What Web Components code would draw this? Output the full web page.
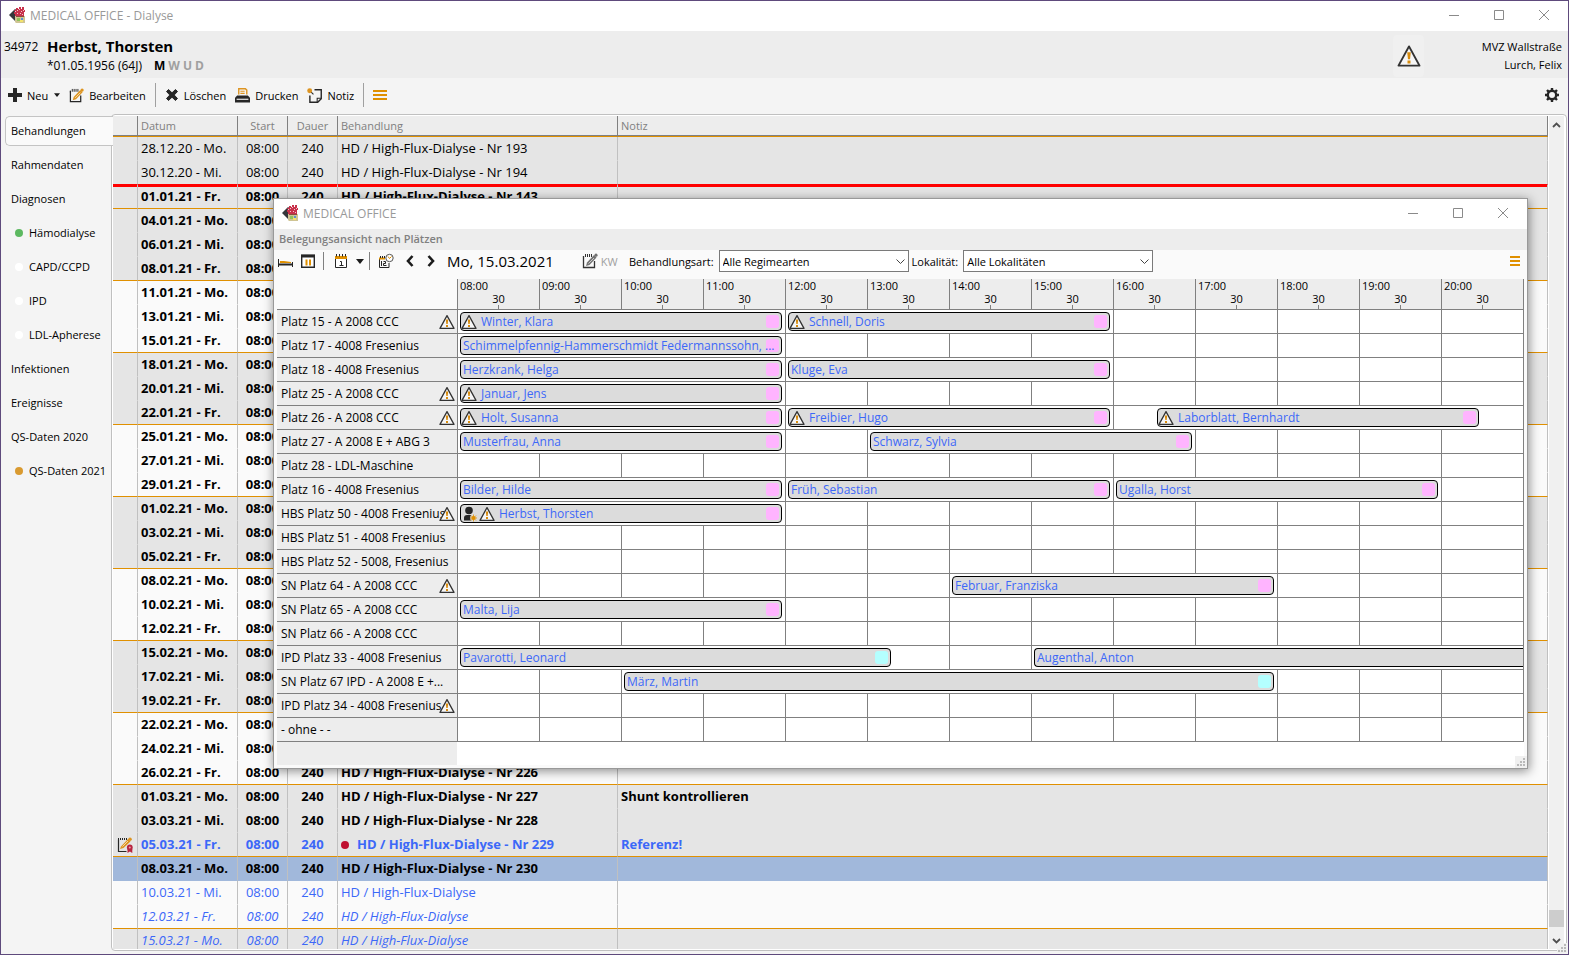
<!DOCTYPE html>
<html lang="de">
<head>
<meta charset="utf-8">
<title>MEDICAL OFFICE - Dialyse</title>
<style>
  html, body {
    height: 100%;
    margin: 0;
  }
  body {
    font-family: "Open Sans", "Noto Sans", sans-serif;
    font-size: 11px;
    color: #000;
    overflow: hidden;
  }
</style>
</head>
<body>
<office-app></office-app>

<script>
// all icons: viewBox and shapes
const ICONS = {
  logo: ['0 0 16 16', `
    <path d="M0 8 6 2v12z" fill="#35363a"/><path d="M6 2h1v12H6z" fill="#77787a"/>
    <path d="M5 3h2V1h2v1h1V0h2v2h1V0h2v3h1v2h-1v5H6V7H5V5h1z" fill="#c8304a"/>
    <path d="M8 3h1v1H8zM12 4h1v1h-1zM8 6h1v1H8zM11 6h1v1h-1zM14 3h1v1h-1zM10 2h1v1h-1zM13 7h1v1h-1zM6 4h1v1H6z" fill="#f3c3cb"/>
    <path d="M6 9h10v7H7l-1-1z" fill="#cfc493"/><path d="M8 11h3v3H8z" fill="#8fc25a"/>
    <path d="M12 11h2v2h-2z" fill="#5d8fcf"/><path d="M11 13h3v2h-3z" fill="#f4e46a"/><path d="M7 9h8v1H7z" fill="#8c4a3e"/>`],
  min: ['0 0 10 10', '<path d="M0 5.5h10" stroke="#8a8a8a" fill="none"/>'],
  max: ['0 0 10 10', '<path d="M.5.5h9v9h-9z" stroke="#8a8a8a" fill="none"/>'],
  close: ['0 0 10 10', '<path d="M0 0l10 10M10 0L0 10" stroke="#8a8a8a" fill="none"/>'],
  warn: ['0 0 16 16', `
    <path d="M8 1.6 15 14.4H1z" fill="#f6f6f6" stroke="#333" stroke-width="1.3" stroke-linejoin="round"/>
    <path d="M6.8 5.5h2.4l-.5 4.6H7.3zM7 11h2v2H7z" fill="#d88c0e"/>`],
  plus: ['0 0 14 14', '<path d="M5 0h4v5h5v4H9v5H5V9H0V5h5z" fill="#262626"/>'],
  caret: ['0 0 8 5', '<path d="M0 0h8L4 5z" fill="#1c1c1c"/>'],
  edit: ['0 0 16 16', `
    <path d="M1.5 3v11.500h11V8" fill="none" stroke="#262626" stroke-width="1.3"/>
    <path d="M1.5 3v2M3.5 1v3M5.5 1v3M7.5 1v3M9.5 1v3" stroke="#262626"/>
    <path d="M5 9.5 12 2l2.5 2.5L7.5 12 4 13z" fill="#dd9420"/>
    <path d="M6.5 10.5 12 5" stroke="#fff3d8" stroke-width=".8"/><circle cx="14" cy="2.2" r="1.7" fill="#dd9420"/>`],
  editgray: ['0 0 16 16', `
    <path d="M1.5 3v11.500h11V8" fill="none" stroke="#333" stroke-width="1.3"/>
    <path d="M1.5 3v2M3.5 1v3M5.5 1v3M7.5 1v3M9.5 1v3" stroke="#333"/>
    <path d="M5 9.5 12 2l2.5 2.5L7.5 12 4 13z" fill="#747474"/>
    <path d="M6.5 10.5 12 5" stroke="#ddd" stroke-width=".8"/><circle cx="14" cy="2.2" r="1.6" fill="#747474"/>`],
  editseal: ['0 0 16 16', `
    <path d="M1.500 2.500v12h8" fill="none" stroke="#262626" stroke-width="1.2"/>
    <path d="M1.5 1v3M3.5 1v2M5.5 1v2M7.5 1v2M9.5 1v2" stroke="#262626"/>
    <path d="M4 9.500 11 2l2.500 2.500L6.500 11 3 12z" fill="#dd9420"/><circle cx="13" cy="2.200" r="1.800" fill="#dd9420"/>
    <path d="M5.500 9.500 11 4" stroke="#fff3d8" stroke-width=".7"/>
    <circle cx="12.800" cy="10.500" r="2.900" fill="#b8253f"/><circle cx="12.800" cy="10.500" r="1" fill="#e7a0ab"/>
    <path d="M10.500 12h4.800v4l-2.400-1.400-2.400 1.400z" fill="#b8253f"/>`],
  cross: ['0 0 14 14', '<path d="M1.500 3.500 3.500 1.500 7 4.800l3.500-3.300 2 2L9.200 7l3.300 3.500-2 2L7 9.200l-3.500 3.300-2-2L4.800 7z" fill="#262626" stroke="#262626"/>'],
  print: ['0 0 14 14', `
    <path d="M3.500 6V.7h6.200l1.300 1.300v4" fill="none" stroke="#dd9420" stroke-width="1.300"/>
    <path d="M5 3h4M5 5h4" stroke="#dd9420"/>
    <path d="M2 7h10l2 2v4.500H0V9z" fill="#262626"/><path d="M1.500 10.500h11" stroke="#fff"/>`],
  note: ['0 0 14 14', `
    <path d="M7 1.600h6.300v8.400L10 13.300H2.700V7" fill="none" stroke="#262626" stroke-width="1.300"/>
    <path d="M9.500 13V9.500H13" fill="none" stroke="#262626"/>
    <path d="M3 3l3 3" stroke="#262626"/><circle cx="2.500" cy="2.500" r="2.300" fill="#dd9420"/>`],
  menu: ['0 0 14 10', '<path d="M0 0h14v2H0zM0 4h14v2H0zM0 8h14v2H0z" fill="#e09000"/>'],
  menusmall: ['0 0 10 10', '<path d="M0 0h10v2H0zM0 4h10v2H0zM0 8h10v2H0z" fill="#e09000"/>'],
  gear: ['0 0 14 14', `
    <circle cx="7" cy="7" r="4.200" fill="none" stroke="#262626" stroke-width="2.400"/>
    <path d="M7 0v2.500M7 11.500V14M0 7h2.500M11.500 7H14M2 2l1.800 1.800M10.200 10.200 12 12M12 2l-1.800 1.800M3.800 10.200 2 12" stroke="#262626" stroke-width="2.400"/>`],
  bed: ['0 0 16 16', `
    <path d="M1.500 6v8M15.500 9v5" stroke="#262626" fill="none"/><path d="M1 10.500h15v2H1z" fill="#262626"/>
    <path d="M3 9.500V8h4l7 1v1H3z" fill="#e09000"/>`],
  columns: ['0 0 16 16', `
    <path d="M1.700 2.500h12.600v11.800H1.700z" fill="#fff" stroke="#262626" stroke-width="1.400"/><path d="M1 1.500h14v3H1z" fill="#262626"/>
    <path d="M5.500 6.500h2v6h-2zM9 6.500h2v6H9z" fill="#e09000"/>`],
  day: ['0 0 16 16', `
    <path d="M2.500 5v9.500h11V5" fill="#fff" stroke="#262626"/><path d="M2 3h12v3H2z" fill="#e09000"/>
    <path d="M3.500 1v2.500M6.500 1v2.500M9.500 1v2.500M12.500 1v2.500" stroke="#262626"/><path d="M7 8.500h1.500V12M6.500 12.500h4" fill="none" stroke="#262626"/>`],
  dayclock: ['0 0 16 16', `
    <path d="M1.500 6v8.500h9.500V10" fill="none" stroke="#262626"/><path d="M1 4.500h6v2H1z" fill="#e09000"/>
    <path d="M2.500 3v2M4.500 3v2M6.500 3v2M3.500 8v5M5.500 8.500h2v2h-2v2h3" fill="none" stroke="#262626"/>
    <circle cx="11.500" cy="5" r="3.700" fill="#fff" stroke="#555"/><path d="M10 3.500 11.500 5.500 13.500 3.500" fill="none" stroke="#e09000"/>`],
  prev: ['0 0 10 14', '<path d="M7.500 2 3 7l4.500 5" fill="none" stroke="#1c1c1c" stroke-width="2.600"/>'],
  next: ['0 0 10 14', '<path d="M2.500 2 7 7l-4.500 5" fill="none" stroke="#1c1c1c" stroke-width="2.600"/>'],
  down: ['0 0 9 5', '<path d="M.5.5l4 4 4-4" fill="none" stroke="#444"/>'],
  up: ['0 0 9 6', '<path d="M1 5l3.500-3.500L8 5" fill="none" stroke="#505050" stroke-width="1.800"/>'],
  sdown: ['0 0 9 6', '<path d="M1 1l3.500 3.500L8 1" fill="none" stroke="#505050" stroke-width="1.800"/>'],
  person: ['0 0 16 16', `
    <circle cx="8" cy="4.500" r="3.800" fill="#262626"/><path d="M3 14.500V12q0-3 3-3h4q2 0 2 2v3.500z" fill="#262626"/>
    <circle cx="12.500" cy="12" r="3.400" fill="#dcdcdc"/><circle cx="12.500" cy="12" r="2" fill="#e09000"/>
    <path d="M12.500 8.500v7M9 12h7M10 9.500l5 5M15 9.500l-5 5" stroke="#e09000" stroke-width=".8"/>`],
  grip: ['0 0 8 8', '<path d="M6 0h2v2H6zM3 3h2v2H3zM6 3h2v2H6zM0 6h2v2H0zM3 6h2v2H3zM6 6h2v2H6z" fill="#b9b9b9"/>']
};

class MoIcon extends HTMLElement {
  connectedCallback() {
    if (this.shadowRoot) return;
    const [box, body] = ICONS[this.getAttribute('name')];
    const w = this.getAttribute('w') || 16;
    const h = this.getAttribute('h') || w;
    this.attachShadow({mode: 'open'}).innerHTML = `
      <style>
        :host { display: inline-flex; flex: none; }
        svg { display: block; }
      </style>
      <svg width="${w}" height="${h}" viewBox="${box}" aria-hidden="true">${body}</svg>`;
  }
}

// caption bar with logo, title and the three window buttons
class TitleBar extends HTMLElement {
  connectedCallback() {
    this.attachShadow({mode: 'open'}).innerHTML = `
      <style>
        :host { display: flex; align-items: center; height: 28px; padding: 0 2px 2px 0; background: #fff; color: #999; font-size: 12px; }
        mo-icon { margin: 0 5px 0 8px; }
        span { flex: 1; white-space: nowrap; }
        button { display: grid; place-items: center; width: 45px; height: 28px; padding: 0; border: 0; background: none; }
        button mo-icon { margin: 0; }
      </style>
      <mo-icon name="logo"></mo-icon>
      <span><slot></slot></span>
      <button aria-label="Minimieren"><mo-icon name="min" w="10"></mo-icon></button>
      <button aria-label="Maximieren"><mo-icon name="max" w="10"></mo-icon></button>
      <button aria-label="Schließen"><mo-icon name="close" w="10"></mo-icon></button>`;
  }
}

class PatientHeader extends HTMLElement {
  connectedCallback() {
    this.attachShadow({mode: 'open'}).innerHTML = `
      <style>
        :host { display: flex; align-items: center; height: 45px; padding: 2px 6px 0 3px; background: #ededed; font-size: 12px; }
        .who { display: grid; grid-template-columns: 43px auto; line-height: 19px; flex: 1; }
        h1 { margin: 0; font-size: 15px; line-height: 19px; }
        .born { grid-column: 2; display: flex; gap: 12px; }
        b { color: #a0a0a0; margin-right: 3px; }
        b:first-child { color: #000; }
        button { width: 31px; height: 42px; padding: 0; border: 0; border-radius: 4px; background: #f0f0f0; display: grid; place-items: center; }
        .office { width: 138px; text-align: right; line-height: 18px; font-size: 11px; }
      </style>
      <div class="who">
        <span>34972</span><h1>Herbst, Thorsten</h1>
        <div class="born"><span>*01.05.1956 (64J)</span><span><b>M</b><b>W</b><b>U</b><b>D</b></span></div>
      </div>
      <button aria-label="Warnungen"><mo-icon name="warn" w="24"></mo-icon></button>
      <div class="office">MVZ Wallstraße<br>Lurch, Felix</div>`;
  }
}

class ToolButton extends HTMLElement {
  connectedCallback() {
    const size = this.getAttribute('w') || 14;
    this.attachShadow({mode: 'open'}).innerHTML = `
      <style>
        :host { display: inline-flex; }
        button { display: flex; align-items: center; gap: 5px; height: 24px; padding: 0; border: 0; background: none; font: inherit; color: inherit; white-space: nowrap; }
      </style>
      <button aria-label="${this.getAttribute('label') || this.textContent}">
        <mo-icon name="${this.getAttribute('icon')}" w="${size}" h="${this.getAttribute('h') || size}"></mo-icon><slot></slot>
      </button>`;
  }
}

class MainToolbar extends HTMLElement {
  connectedCallback() {
    this.attachShadow({mode: 'open'}).innerHTML = `
      <style>
        :host { display: flex; align-items: center; gap: 9px; height: 34px; padding: 0 9px 2px 7px; background: #f4f4f4; }
        i { width: 1px; height: 24px; background: #a0a0a0; }
        .caret { margin: 0 0 0 -3px; }
        .end { margin-left: auto; }
      </style>
      <tool-button icon="plus">Neu</tool-button>
      <tool-button class="caret" icon="caret" w="6" h="4" label="Neu, Auswahl"></tool-button>
      <tool-button icon="edit" w="15">Bearbeiten</tool-button>
      <i></i>
      <tool-button icon="cross">Löschen</tool-button>
      <tool-button icon="print" w="15">Drucken</tool-button>
      <tool-button icon="note" w="15">Notiz</tool-button>
      <i></i>
      <tool-button icon="menu" w="14" h="10" label="Menü"></tool-button>
      <tool-button class="end" icon="gear" label="Einstellungen"></tool-button>`;
  }
}

class SideTabs extends HTMLElement {
  connectedCallback() {
    const tabs = [
      ['Behandlungen'], ['Rahmendaten'], ['Diagnosen'],
      ['Hämodialyse', '#5cb860'], ['CAPD/CCPD', '#fff'], ['IPD', '#fff'], ['LDL-Apherese', '#fff'],
      ['Infektionen'], ['Ereignisse'], ['QS-Daten 2020'], ['QS-Daten 2021', '#d99a30']
    ];
    this.attachShadow({mode: 'open'}).innerHTML = `
      <style>
        :host { display: block; width: 110px; padding: 2px 0 0 4px; box-sizing: border-box; }
        nav { display: grid; gap: 4px; }
        button { display: flex; align-items: center; gap: 6px; height: 30px; padding: 0 0 1px 5px; border: 1px solid transparent; background: none; font: inherit; color: inherit; text-align: left; white-space: nowrap; }
        .active { position: relative; margin-right: -2px; border-color: #c4c4c4; border-right: 0; border-radius: 5px 0 0 5px; background: #fafafa; }
        .sub { padding-left: 9px; }
        .sub::before { content: ""; width: 8px; height: 8px; border-radius: 4px; background: var(--dot); }
      </style>
      <nav>${tabs.map(([t, c], i) => `<button class="${i ? '' : 'active'} ${c ? 'sub' : ''}" style="--dot:${c}">${t}</button>`).join('')}</nav>`;
  }
}

// treatments: date, class names, number, note
// "w" marks the last row of a week; rows without a number have no details loaded
const DAYS = [
  ['28.12.20 - Mo.', 'g', 'Nr 193'], ['30.12.20 - Mi.', 'g year', 'Nr 194'], ['01.01.21 - Fr.', 'g b first w', 'Nr 143'],
  ['04.01.21 - Mo.', 'g b'], ['06.01.21 - Mi.', 'g b'], ['08.01.21 - Fr.', 'g b w'],
  ['11.01.21 - Mo.', 'b'], ['13.01.21 - Mi.', 'b'], ['15.01.21 - Fr.', 'b w'],
  ['18.01.21 - Mo.', 'g b'], ['20.01.21 - Mi.', 'g b'], ['22.01.21 - Fr.', 'g b w'],
  ['25.01.21 - Mo.', 'b'], ['27.01.21 - Mi.', 'b'], ['29.01.21 - Fr.', 'b w'],
  ['01.02.21 - Mo.', 'g b'], ['03.02.21 - Mi.', 'g b'], ['05.02.21 - Fr.', 'g b w'],
  ['08.02.21 - Mo.', 'b'], ['10.02.21 - Mi.', 'b'], ['12.02.21 - Fr.', 'b w'],
  ['15.02.21 - Mo.', 'g b'], ['17.02.21 - Mi.', 'g b'], ['19.02.21 - Fr.', 'g b w'],
  ['22.02.21 - Mo.', 'b'], ['24.02.21 - Mi.', 'b'], ['26.02.21 - Fr.', 'b w', 'Nr 226'],
  ['01.03.21 - Mo.', 'g b', 'Nr 227', 'Shunt kontrollieren'], ['03.03.21 - Mi.', 'g b', 'Nr 228'],
  ['05.03.21 - Fr.', 'g b blue seal w', 'Nr 229', 'Referenz!'], ['08.03.21 - Mo.', 'b sel', 'Nr 230'],
  ['10.03.21 - Mi.', 'blue', ''], ['12.03.21 - Fr.', 'blue it w', ''], ['15.03.21 - Mo.', 'g blue it', '']
];

class TreatmentTable extends HTMLElement {
  connectedCallback() {
    const rows = DAYS.map(([date, cls, nr, note]) => {
      const loaded = nr !== undefined;
      const seal = cls.includes('seal');
      return `<tr class="${cls}">
        <td class="c">${seal ? '<mo-icon name="editseal"></mo-icon>' : ''}</td>
        <td>${date}</td><td class="c">08:00</td><td class="c">${loaded ? '240' : ''}</td>
        <td>${seal ? '<i></i>' : ''}${loaded ? 'HD / High-Flux-Dialyse' : ''}${nr ? ' - ' + nr : ''}</td>
        <td>${note || ''}</td></tr>`;
    }).join('');
    this.attachShadow({mode: 'open'}).innerHTML = `
      <style>
        :host { display: block; overflow: hidden; background: #fafafa; }
        table { width: 100%; table-layout: fixed; border-collapse: separate; border-spacing: 0; font-size: 13px; }
        th, td { box-sizing: border-box; padding: 0 3px; text-align: left; white-space: nowrap; overflow: hidden; border-right: 1px solid #c0c0c0; }
        th { height: 21px; font-size: 11px; line-height: 18px; font-weight: normal; color: #808080; background: #ededed; border-right-color: #808080; border-bottom: 1px solid #e09000; box-shadow: inset 0 -1px #808080; }
        td { height: 24px; padding-bottom: 2px; line-height: 20px; border-bottom: 1px solid transparent; }
        .c { text-align: center; }
        .g { background: #e5e5e5; }
        .b { font-weight: bold; }
        .it { font-style: italic; }
        .blue { color: #3c68f8; }
        .w td { border-bottom-color: #e09000; }
        .year td { border-bottom-color: #f00; }
        .first td { box-shadow: inset 0 2px #f00; }
        .sel { background: #a1b8db; }
        mo-icon { vertical-align: middle; }
        i { display: inline-block; width: 8px; height: 8px; margin-right: 8px; border-radius: 4px; background: #c01030; }
      </style>
      <table>
        <colgroup><col style="width:25px"><col style="width:100px"><col style="width:50px"><col style="width:50px"><col style="width:280px"><col></colgroup>
        <thead><tr><th></th><th>Datum</th><th class="c">Start</th><th class="c">Dauer</th><th>Behandlung</th><th>Notiz</th></tr></thead>
        <tbody>${rows}</tbody>
      </table>`;
  }
}

class ScrollRail extends HTMLElement {
  connectedCallback() {
    this.attachShadow({mode: 'open'}).innerHTML = `
      <style>
        :host { display: grid; grid-template-rows: 17px 1fr 17px; justify-items: center; align-items: center; width: 16px; box-sizing: border-box; background: #f0f0f0; border-right: 1px solid #fff; }
        .track { align-self: stretch; width: 15px; display: flex; flex-direction: column; justify-content: flex-end; padding-bottom: 5px; }
        .thumb { height: 17px; background: #cdcdcd; }
      </style>
      <mo-icon name="up" w="9" h="6"></mo-icon>
      <div class="track"><div class="thumb"></div></div>
      <mo-icon name="sdown" w="9" h="6"></mo-icon>`;
  }
}

// one booked slot; start and end are hours on the 8-21 scale
class ScheduleBar extends HTMLElement {
  connectedCallback() {
    const start = Math.round((this.getAttribute('start') - 8) * 6) + 1;
    const end = Math.round((this.getAttribute('end') - 8) * 6) + 1;
    this.style.gridColumn = start + ' / ' + end;
    const icons = (this.getAttribute('icons') || '').split(' ').filter(Boolean);
    this.attachShadow({mode: 'open'}).innerHTML = `
      <style>
        :host { display: grid; box-sizing: border-box; grid-row: 1; align-items: center; height: 19px; margin: 2px 3px; padding: 0 2px; border: 1px solid #000; border-radius: 4px; background: #dcdcdc; box-shadow: 0 0 0 2px #fff; color: #3c68f8; overflow: hidden; }
        :host([open]) { margin-right: 0; border-right: 0; border-radius: 4px 0 0 4px; }
        .mark { grid-area: 1 / 1; justify-self: end; width: 13px; height: 13px; border-radius: 3px; background: var(--mark, #ffb4ff); }
        :host([open]) .mark { display: none; }
        .text { grid-area: 1 / 1; display: flex; align-items: center; gap: 2px; white-space: nowrap; line-height: 17px; }
        .text.has { margin-left: -2px; }
        .has slot { display: block; margin-left: 2px; }
      </style>
      <div class="mark"></div>
      <div class="text ${icons.length ? 'has' : ''}">${icons.map(n => `<mo-icon name="${n}"></mo-icon>`).join('')}<slot></slot></div>`;
  }
}

// place, warning flag, bookings [start, end, name, icons, mark]
const CYAN = '#b4ffff';
const PLACES = [
  ['Platz 15 - A 2008 CCC', 1, [[8, 12, 'Winter, Klara', 'warn'], [12, 16, 'Schnell, Doris', 'warn']]],
  ['Platz 17 - 4008 Fresenius', 0, [[8, 12, 'Schimmelpfennig-Hammerschmidt Federmannssohn, ...']]],
  ['Platz 18 - 4008 Fresenius', 0, [[8, 12, 'Herzkrank, Helga'], [12, 16, 'Kluge, Eva']]],
  ['Platz 25 - A 2008 CCC', 1, [[8, 12, 'Januar, Jens', 'warn']]],
  ['Platz 26 - A 2008 CCC', 1, [[8, 12, 'Holt, Susanna', 'warn'], [12, 16, 'Freibier, Hugo', 'warn'], [16.5, 20.5, 'Laborblatt, Bernhardt', 'warn']]],
  ['Platz 27 - A 2008 E + ABG 3', 0, [[8, 12, 'Musterfrau, Anna'], [13, 17, 'Schwarz, Sylvia']]],
  ['Platz 28 - LDL-Maschine', 0, []],
  ['Platz 16 - 4008 Fresenius', 0, [[8, 12, 'Bilder, Hilde'], [12, 16, 'Früh, Sebastian'], [16, 20, 'Ugalla, Horst']]],
  ['HBS Platz 50 - 4008 Fresenius', 1, [[8, 12, 'Herbst, Thorsten', 'person warn']]],
  ['HBS Platz 51 - 4008 Fresenius', 0, []],
  ['HBS Platz 52 - 5008, Fresenius', 0, []],
  ['SN Platz 64 - A 2008 CCC', 1, [[14, 18, 'Februar, Franziska']]],
  ['SN Platz 65 - A 2008 CCC', 0, [[8, 12, 'Malta, Lija']]],
  ['SN Platz 66 - A 2008 CCC', 0, []],
  ['IPD Platz 33 - 4008 Fresenius', 0, [[8, 13.34, 'Pavarotti, Leonard', '', CYAN], [15, 21, 'Augenthal, Anton', '', '', 'open']]],
  ['SN Platz 67 IPD - A 2008 E +...', 0, [[10, 18, 'März, Martin', '', CYAN]]],
  ['IPD Platz 34 - 4008 Fresenius', 1, []],
  ['- ohne - -', 0, []]
];

class SchedulePlan extends HTMLElement {
  connectedCallback() {
    const hours = Array.from({length: 13}, (_, i) => String(i + 8).padStart(2, '0') + ':00');
    const head = hours.map(h => `<th class="hour"><div>${h}</div><div class="half">30</div></th>`).join('');
    const body = PLACES.map(([name, warn, slots]) => `<tr>
      <th class="place"><div><span>${name}</span>${warn ? '<mo-icon name="warn"></mo-icon>' : ''}</div></th>
      <td colspan="13"><div class="lane">${slots.map(([s, e, who, icons, mark, open]) =>
        `<schedule-bar start="${s}" end="${e}" icons="${icons || ''}" ${open || ''} ${mark ? `style="--mark:${mark}"` : ''}>${who}</schedule-bar>`).join('')}</div></td></tr>`).join('');
    this.attachShadow({mode: 'open'}).innerHTML = `
      <style>
        :host { display: block; background: #fff; }
        table { width: 100%; table-layout: fixed; border-collapse: separate; border-spacing: 0; border-right: 1px solid #808080; font-size: 12px; }
        th, td { box-sizing: border-box; padding: 0; font-weight: normal; text-align: left; border-bottom: 1px solid #808080; }
        .corner { background: #fafafa; }
        .hour { height: 31px; font-size: 11px; background: #ededed; border-left: 1px solid #808080; vertical-align: top; line-height: 13px; }
        .hour div:first-child { padding-left: 2px; }
        .half { display: grid; justify-items: center; }
        .half::after { content: ""; width: 1px; height: 4px; background: #808080; }
        .place { height: 24px; background: #ededed; }
        .place div { display: grid; align-items: center; height: 23px; padding: 0 2px 0 4px; white-space: nowrap; overflow: hidden; }
        .place span, .place mo-icon { grid-area: 1 / 1; }
        .place mo-icon { justify-self: end; }
        .lane { display: grid; grid-template-columns: repeat(78, minmax(0, 1fr)); height: 23px; overflow: hidden;
          background: repeating-linear-gradient(90deg, #808080 0 1px, #fff 1px calc(100% / 13)); }
        .foot { width: 180px; height: 23px; background: #ededed; }
      </style>
      <table>
        <colgroup><col style="width:180px"><col span="13"></colgroup>
        <thead><tr><th class="corner"></th>${head}</tr></thead>
        <tbody>${body}</tbody>
      </table>
      <div class="foot"></div>`;
  }
}

class ComboBox extends HTMLElement {
  connectedCallback() {
    this.attachShadow({mode: 'open'}).innerHTML = `
      <style>
        :host { display: flex; align-items: center; gap: 5px; }
        div { display: grid; align-items: center; }
        select { grid-area: 1 / 1; width: 190px; height: 22px; padding: 0 3px; border: 1px solid #7a7a7a; border-radius: 0; background: #fff; appearance: none; font: inherit; color: inherit; }
        mo-icon { grid-area: 1 / 1; justify-self: end; margin-right: 4px; pointer-events: none; }
      </style>
      <label for="box">${this.getAttribute('label')}</label>
      <div><select id="box"><option>${this.getAttribute('value')}</option></select><mo-icon name="down" w="9" h="5"></mo-icon></div>`;
  }
}

class ScheduleDialog extends HTMLElement {
  connectedCallback() {
    this.attachShadow({mode: 'open'}).innerHTML = `
      <style>
        :host { display: block; border: 1px solid #999; background: #fafafa; box-shadow: 1px 2px 10px rgba(0, 0, 0, .45); }
        h2 { margin: 0; padding: 0 0 2px 5px; font-size: 11px; line-height: 19px; font-weight: 600; color: #808080; background: #ededed; }
        .bar { display: flex; align-items: center; height: 22px; padding: 0 7px 7px 3px; }
        .bar > i { width: 1px; height: 18px; background: #808080; margin: 0 9px 0 7px; }
        .bar > .tight { margin: 0 8px 0 5px; }
        .gap { margin-right: 7px; }
        .nav { margin-right: 11px; }
        .date { font-size: 15px; width: 135px; }
        .kw { color: #a0a0a0; width: 31px; }
        combo-box { margin-right: 3px; }
        .end { margin-left: auto; }
        schedule-plan { margin: 0 3px; }
        footer { height: 3px; display: flex; justify-content: flex-end; align-items: flex-end; }
        footer mo-icon { padding: 2px; background: #f0f0f0; }
      </style>
      <title-bar>MEDICAL OFFICE</title-bar>
      <h2>Belegungsansicht nach Plätzen</h2>
      <div class="bar">
        <tool-button class="gap" icon="bed" w="16" label="Plätze"></tool-button>
        <tool-button icon="columns" w="16" label="Spalten"></tool-button>
        <i></i>
        <tool-button class="gap" icon="day" w="16" label="Tag"></tool-button>
        <tool-button icon="caret" w="8" h="5" label="Tag, Auswahl"></tool-button>
        <i class="tight"></i>
        <tool-button class="nav" icon="dayclock" w="16" label="Heute"></tool-button>
        <tool-button class="nav" icon="prev" w="10" h="14" label="Zurück"></tool-button>
        <tool-button class="nav" icon="next" w="10" h="14" label="Weiter"></tool-button>
        <span class="date">Mo, 15.03.2021</span>
        <tool-button icon="editgray" w="16" label="Bearbeiten"></tool-button>
        <span class="kw">&nbsp;KW</span>
        <combo-box label="Behandlungsart:" value="Alle Regimearten"></combo-box>
        <combo-box label="Lokalität:" value="Alle Lokalitäten"></combo-box>
        <tool-button class="end" icon="menusmall" w="10" label="Menü"></tool-button>
      </div>
      <schedule-plan></schedule-plan>
      <footer><mo-icon name="grip" w="8"></mo-icon></footer>`;
  }
}

class OfficeApp extends HTMLElement {
  connectedCallback() {
    this.attachShadow({mode: 'open'}).innerHTML = `
      <style>
        :host { position: relative; display: flex; flex-direction: column; height: 100vh; box-sizing: border-box; border: 1px solid #5e4a7c; background: #f4f4f4; overflow: hidden; }
        main { flex: 1; min-height: 0; display: flex; padding: 0 1px 3px 0; }
        .panel { flex: 1; min-width: 0; display: flex; border: 1px solid #c0c0c0; border-radius: 4px; padding: 1px; background: #fff; box-sizing: border-box; }
        treatment-table { flex: 1; min-width: 0; }
        scroll-rail { margin-left: 1px; }
        schedule-dialog { position: absolute; left: 272px; right: 40px; top: 197px; }
        .grip { position: absolute; right: 1px; bottom: 1px; padding: 1px; background: #f0f0f0; }
      </style>
      <title-bar>MEDICAL OFFICE - Dialyse</title-bar>
      <patient-header></patient-header>
      <main-toolbar></main-toolbar>
      <main>
        <side-tabs></side-tabs>
        <div class="panel"><treatment-table></treatment-table><scroll-rail></scroll-rail></div>
      </main>
      <schedule-dialog></schedule-dialog>
      <mo-icon class="grip" name="grip" w="8"></mo-icon>`;
  }
}

customElements.define('mo-icon', MoIcon);
customElements.define('title-bar', TitleBar);
customElements.define('patient-header', PatientHeader);
customElements.define('tool-button', ToolButton);
customElements.define('main-toolbar', MainToolbar);
customElements.define('side-tabs', SideTabs);
customElements.define('treatment-table', TreatmentTable);
customElements.define('scroll-rail', ScrollRail);
customElements.define('schedule-bar', ScheduleBar);
customElements.define('schedule-plan', SchedulePlan);
customElements.define('combo-box', ComboBox);
customElements.define('schedule-dialog', ScheduleDialog);
customElements.define('office-app', OfficeApp);
</script>
</body>
</html>
